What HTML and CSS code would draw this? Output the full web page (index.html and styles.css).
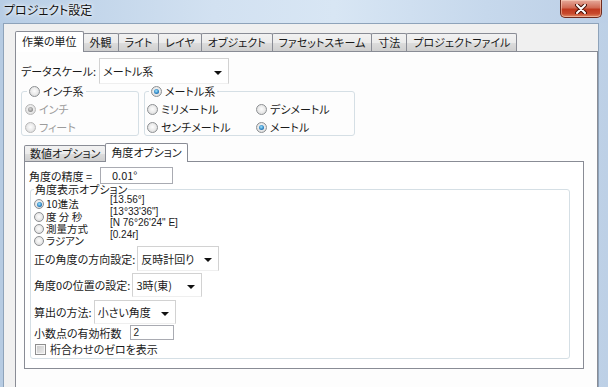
FILE: index.html
```html
<!DOCTYPE html>
<html lang="ja">
<head>
    <meta charset="UTF-8">
    <title>プロジェクト設定</title>
    <link rel="stylesheet" href="styles.css">
</head>
<body>
    <div class="window">
        <div class="titlebar">
            <span class="title">プロジェクト設定</span>
            <button class="close-btn" aria-label="閉じる">
                <svg width="12" height="10" viewBox="0 0 12 10">
                    <path d="M2 1 L10 9 M10 1 L2 9" stroke="#4a1208" stroke-width="4" stroke-linecap="round"/>
                    <path d="M2 1 L10 9 M10 1 L2 9" stroke="#fff" stroke-width="2" stroke-linecap="round"/>
                </svg>
            </button>
        </div>

        <div class="client">
            <!-- Main tabs -->
            <ul class="tabs">
                <li class="tab active">作業の単位</li>
                <li class="tab">外観</li>
                <li class="tab">ライト</li>
                <li class="tab">レイヤ</li>
                <li class="tab">オブジェクト</li>
                <li class="tab">ファセットスキーム</li>
                <li class="tab">寸法</li>
                <li class="tab">プロジェクトファイル</li>
            </ul>

            <div class="panel">
                <div class="scale-row">
                    <span>データスケール:</span>
                    <div class="dropdown dd-scale"><span>メートル系</span><i class="arrow"></i></div>
                </div>

                <div class="unit-groups">
                    <fieldset class="group inch-group">
                        <legend><span class="radio"></span>インチ系</legend>
                        <div class="opt dim"><span class="radio on"></span>インチ</div>
                        <div class="opt dim"><span class="radio"></span>フィート</div>
                    </fieldset>
                    <fieldset class="group metric-group">
                        <legend><span class="radio on"></span>メートル系</legend>
                        <div class="metric-grid">
                            <div class="opt"><span class="radio"></span>ミリメートル</div>
                            <div class="opt"><span class="radio"></span>デシメートル</div>
                            <div class="opt"><span class="radio"></span>センチメートル</div>
                            <div class="opt"><span class="radio on"></span>メートル</div>
                        </div>
                    </fieldset>
                </div>

                <!-- Sub tabs -->
                <ul class="tabs sub-tabs">
                    <li class="tab">数値オプション</li>
                    <li class="tab active">角度オプション</li>
                </ul>

                <div class="sub-panel">
                    <div class="precision-row">
                        <span class="precision-label">角度の精度 =</span>
                        <div class="field precision-field">0.01°</div>
                    </div>

                    <fieldset class="group angle-group">
                        <legend>角度表示オプション</legend>
                        <div class="format-list">
                            <div class="format-names">
                                <div class="opt"><span class="radio on"></span>10進法</div>
                                <div class="opt"><span class="radio"></span>度 分 秒</div>
                                <div class="opt"><span class="radio"></span>測量方式</div>
                                <div class="opt"><span class="radio"></span>ラジアン</div>
                            </div>
                            <div class="format-values">
                                <div>[13.56°]</div>
                                <div>[13°33'36"]</div>
                                <div>[N 76°26'24" E]</div>
                                <div>[0.24r]</div>
                            </div>
                        </div>

                        <div class="form-row row-direction">
                            <span>正の角度の方向設定:</span>
                            <div class="dropdown dd-direction"><span>反時計回り</span><i class="arrow"></i></div>
                        </div>
                        <div class="form-row row-zero">
                            <span>角度0の位置の設定:</span>
                            <div class="dropdown dd-zero"><span>3時(東)</span><i class="arrow"></i></div>
                        </div>
                        <div class="form-row row-method">
                            <span>算出の方法:</span>
                            <div class="dropdown dd-method"><span>小さい角度</span><i class="arrow"></i></div>
                        </div>
                        <div class="form-row row-digits">
                            <span>小数点の有効桁数</span>
                            <div class="field digits-field">2</div>
                        </div>
                        <div class="form-row row-check">
                            <span class="checkbox"></span>
                            <span>桁合わせのゼロを表示</span>
                        </div>
                    </fieldset>
                </div>
            </div>
        </div>
    </div>
</body>
</html>
```

FILE: styles.css
```css
/* Basic reset */
* {
    margin: 0;
    padding: 0;
    box-sizing: border-box;
}

body {
    width: 608px;
    height: 387px;
    overflow: hidden;
    font-family: "Noto Sans CJK JP", "Liberation Sans", sans-serif;
    font-size: 11px;
    color: #1a1a1a;
    font-feature-settings: "palt";
}

/* Window frame */
.window {
    width: 608px;
    height: 387px;
    display: flex;
    flex-direction: column;
    background: linear-gradient(to right, #b6cbe2, #c9dbee 50%, #c4d6ea 85%, #bdd0e6);
}

.titlebar {
    height: 23px;
    display: flex;
    justify-content: space-between;
    align-items: flex-start;
    padding: 0 6px 0 4px;
    background: linear-gradient(to right, #b7cde5, #d2e1f1 35%, #d8e6f4 55%, #c6d8ec 80%, #bccfe6);
}

.title {
    font-size: 12px;
    line-height: 19px;
    color: #111;
    text-shadow: 0 0 6px #fff, 0 0 3px #fff;
}

.close-btn {
    width: 42px;
    height: 18px;
    border: 1px solid #6e2a1e;
    border-top: none;
    border-radius: 0 0 5px 5px;
    background: linear-gradient(to bottom, #e6aa9c, #d16b55 45%, #c0391f 55%, #c84a2d 80%, #e08a66);
    box-shadow: inset 0 0 0 1px rgba(255, 220, 200, 0.5);
    display: flex;
    align-items: center;
    justify-content: center;
}

.client {
    flex: 1;
    margin: 0 9px 0 3px;
    border: 1px solid #8ea3ba;
    border-bottom: none;
    background-color: #f0f0f0;
    padding: 7px 0 0 11px;
    display: flex;
    flex-direction: column;
    overflow: hidden;
}

/* Tabs */
.tabs {
    list-style: none;
    display: flex;
    align-items: flex-end;
    height: 20px;
}

.tab {
    height: 18px;
    line-height: 16px;
    padding: 0 6px;
    margin-right: -1px;
    border: 1px solid #898c95;
    border-bottom: none;
    border-radius: 2px 2px 0 0;
    background: linear-gradient(to bottom, #f2f2f2, #ebebeb 50%, #dddddd 51%, #cfcfcf);
    white-space: nowrap;
}

.tab.active {
    height: 21px;
    line-height: 18px;
    margin-bottom: -1px;
    background: #fff;
    position: relative;
    z-index: 1;
}

.panel {
    flex: 1;
    border: 1px solid #898c95;
    border-bottom: none;
    background-color: #fdfdfd;
    padding: 6px 0 0 5px;
}

/* Dropdowns and fields */
.dropdown {
    display: flex;
    align-items: center;
    justify-content: space-between;
    padding: 0 6px 0 3px;
    background-color: #fff;
    border: 1px solid #d2d2d2;
    border-bottom-color: #efefef;
}

.arrow {
    width: 0;
    height: 0;
    margin-top: 3px;
    border-left: 4px solid transparent;
    border-right: 4px solid transparent;
    border-top: 4px solid #111;
}

.field {
    background-color: #fff;
    border: 1px solid #a9abb2;
}

.scale-row {
    display: flex;
    align-items: center;
    gap: 3px;
}

.dd-scale {
    width: 130px;
    height: 26px;
}

/* Group boxes */
.group {
    border: 1px solid #d5dfe5;
    border-radius: 3px;
    min-width: 0;
}

.group legend {
    display: flex;
    align-items: center;
    gap: 3px;
    line-height: 14px;
    padding: 0 2px;
    margin-left: 2px;
}

.unit-groups {
    display: flex;
    gap: 5px;
}

.inch-group {
    width: 118px;
    padding: 3px 0 0 3px;
}

.metric-group {
    width: 211px;
    padding: 3px 0 0 2px;
}

.metric-grid {
    display: grid;
    grid-template-columns: 109px auto;
    row-gap: 2px;
}

.inch-group .opt + .opt {
    margin-top: 2px;
}

.opt {
    display: flex;
    align-items: center;
    gap: 3px;
    height: 16px;
    white-space: nowrap;
}

.opt.dim {
    color: #9c9c9c;
}

/* Radio buttons */
.radio {
    width: 11px;
    height: 11px;
    border-radius: 50%;
    border: 1px solid #8d9093;
    background: radial-gradient(circle at 50% 45%, #fdfdfd, #e8e8e8 55%, #cfcfcf);
    display: inline-flex;
    align-items: center;
    justify-content: center;
    flex: none;
}

.radio.on::after {
    content: "";
    width: 5px;
    height: 5px;
    border-radius: 50%;
    background: radial-gradient(circle at 45% 40%, #9fe6ff, #2a7fc0 60%, #124a7c);
}

.dim .radio {
    border-color: #b8b8b8;
}

.dim .radio.on::after {
    background: radial-gradient(circle at 45% 40%, #d8d8d8, #8a8a8a 70%);
}

/* Angle options */
.sub-tabs {
    margin: 7px 0 0 3px;
    height: 18px;
}

.sub-tabs .tab {
    height: 16px;
    line-height: 14px;
    padding: 0 5px;
}

.sub-tabs .tab.active {
    height: 19px;
    line-height: 17px;
}

.sub-panel {
    width: 560px;
    margin-left: 3px;
    border: 1px solid #898c95;
    background-color: #fff;
    padding: 5px 0 9px 4px;
}

.precision-row {
    display: flex;
    align-items: center;
    height: 17px;
}

.precision-label {
    width: 71px;
}

.precision-field {
    width: 73px;
    height: 17px;
    line-height: 15px;
    padding-left: 11px;
}

.angle-group {
    width: 540px;
    margin: -1px 0 0 1px;
    padding: 3px 0 3px 3px;
}

.angle-group legend {
    line-height: 12px;
    margin-left: 0;
    padding: 0 1px;
}

.format-list {
    display: flex;
    height: 48px;
}

.format-names {
    width: 76px;
    font-size: 10.5px;
}

.format-names .opt {
    height: 12.4px;
    line-height: 12px;
    gap: 2px;
}

.format-names .radio {
    width: 10px;
    height: 10px;
}

.format-values {
    margin-top: -4px;
    font-family: "Liberation Sans", sans-serif;
    font-size: 10px;
    line-height: 11.7px;
}

.form-row {
    display: flex;
    align-items: center;
    gap: 2px;
    white-space: nowrap;
}

.row-direction { height: 25px; }
.row-zero { height: 24px; margin-top: 2px; }
.row-method { height: 24px; margin-top: 3px; }
.row-digits { height: 15px; margin-top: 1px; gap: 8px; }
.row-check { height: 12px; margin-top: 3px; gap: 4px; padding-left: 1px; }

.dd-direction { width: 82px; height: 25px; }
.dd-zero { width: 70px; height: 24px; }
.dd-method { width: 82px; height: 24px; }

.digits-field {
    width: 44px;
    height: 15px;
    line-height: 13px;
    padding-left: 3px;
    font-family: "Liberation Sans", sans-serif;
    font-size: 10px;
}

.checkbox {
    width: 11px;
    height: 11px;
    border: 1px solid #8f8f8f;
    background: linear-gradient(135deg, #c8c8c8, #eeeeee);
    box-shadow: inset 0 0 0 1px #f6f6f6;
    flex: none;
}
```
